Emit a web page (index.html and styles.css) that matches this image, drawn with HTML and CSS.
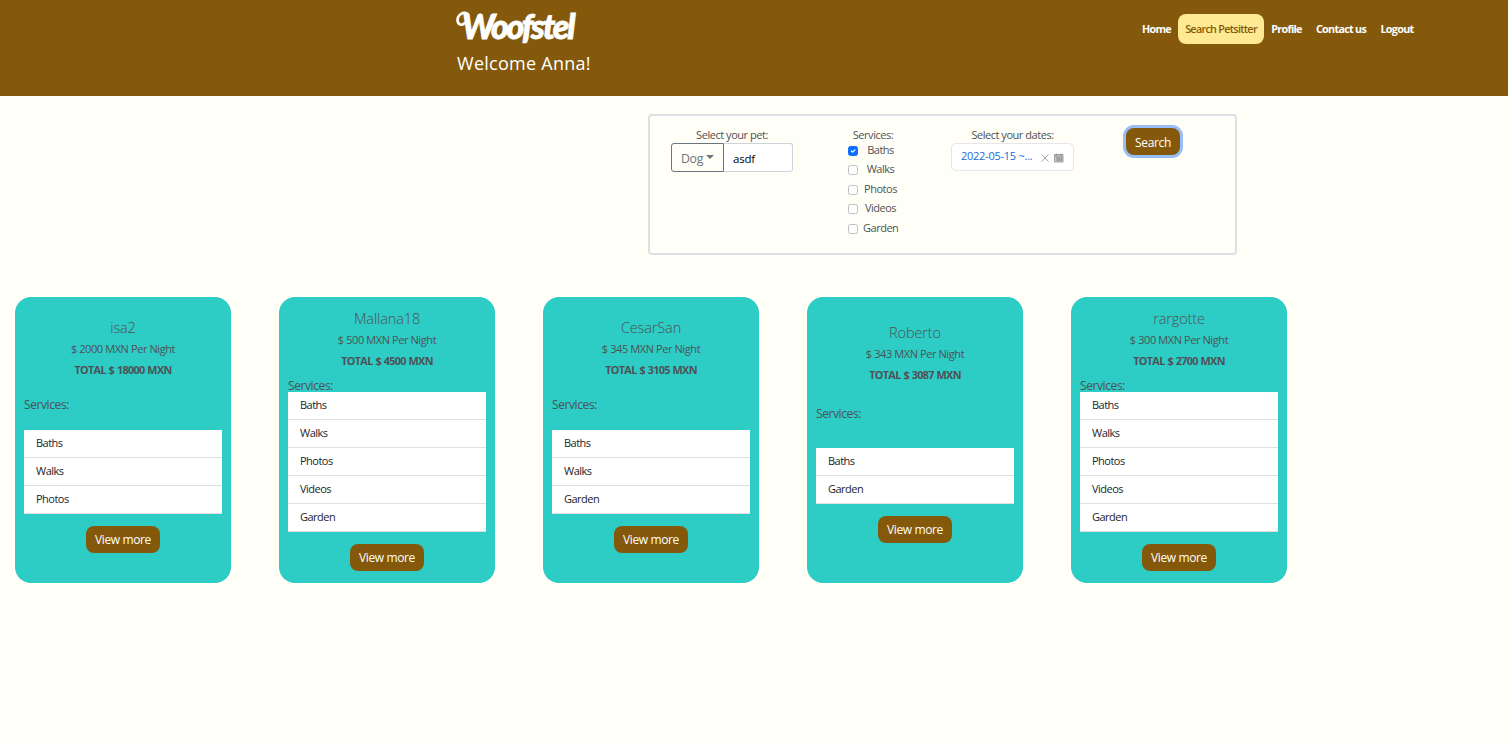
FILE: index.html
```html
<!DOCTYPE html>
<html lang="en">
<head>
<meta charset="utf-8">
<title>Woofstel</title>
<link rel="stylesheet" href="styles.css">
</head>
<body>
<header class="header">
  <div class="brand">
    <h1 class="logo"><svg class="swash" viewBox="0 0 14 22"><path d="M12 3C7 0 1.500 4 1.500 9c0 5 5 6 7 3" fill="none" stroke="#fff" stroke-width="2.600" stroke-linecap="round"/></svg>Woofstel</h1>
    <p class="welcome">Welcome Anna!</p>
  </div>
  <nav class="nav">
    <a class="home">Home</a><a class="active">Search Petsitter</a><a class="profile">Profile</a><a class="contact">Contact us</a><a class="logout">Logout</a>
  </nav>
</header>
<main>
  <section class="filters">
    <div class="field pet">
      <span class="label">Select your pet:</span>
      <div class="group"><button class="drop">Dog<i class="caret"></i></button><div class="name">asdf</div></div>
    </div>
    <div class="field services">
      <span class="label">Services:</span>
      <div class="check"><i class="box checked"><svg viewBox="0 0 20 20"><path d="M6 10l3 3 6-6" fill="none" stroke="#fff" stroke-width="3" stroke-linecap="round" stroke-linejoin="round"/></svg></i><span>Baths</span></div>
      <div class="check"><i class="box"></i><span>Walks</span></div>
      <div class="check"><i class="box"></i><span>Photos</span></div>
      <div class="check"><i class="box"></i><span>Videos</span></div>
      <div class="check"><i class="box"></i><span>Garden</span></div>
    </div>
    <div class="field dates">
      <span class="label">Select your dates:</span>
      <div class="picker"><span class="range">2022-05-15 ~...</span>
        <svg class="clear" viewBox="0 0 8 8"><path d="M.5.5l7 7M7.500.5l-7 7" stroke="#8e8e93" stroke-width=".8"/></svg>
        <svg class="calendar" viewBox="0 0 10 10"><path d="M.5 1.500h8.500v7.500H.5z" fill="#c9c9cc" stroke="#8e8e93" stroke-width=".8"/><path d="M.5 3h8.500M2.500.5V2.500M7 .5V2.500M2 5h6M2 7h6M3.500 4v4M5.500 4v4M7.500 4v4" fill="none" stroke="#8e8e93" stroke-width=".8"/></svg>
      </div>
    </div>
    <button class="button search">Search</button>
  </section>
  <section class="cards">
    <article class="card three">
      <h2>isa2</h2><p class="price">$ 2000 MXN Per Night</p><p class="total">TOTAL $ 18000 MXN</p>
      <p class="heading">Services:</p>
      <ul><li>Baths</li><li>Walks</li><li>Photos</li></ul>
      <button class="button">View more</button>
    </article>
    <article class="card five">
      <h2>Mallana18</h2><p class="price">$ 500 MXN Per Night</p><p class="total">TOTAL $ 4500 MXN</p>
      <p class="heading">Services:</p>
      <ul><li>Baths</li><li>Walks</li><li>Photos</li><li>Videos</li><li>Garden</li></ul>
      <button class="button">View more</button>
    </article>
    <article class="card three">
      <h2>CesarSan</h2><p class="price">$ 345 MXN Per Night</p><p class="total">TOTAL $ 3105 MXN</p>
      <p class="heading">Services:</p>
      <ul><li>Baths</li><li>Walks</li><li>Garden</li></ul>
      <button class="button">View more</button>
    </article>
    <article class="card two">
      <h2>Roberto</h2><p class="price">$ 343 MXN Per Night</p><p class="total">TOTAL $ 3087 MXN</p>
      <p class="heading">Services:</p>
      <ul><li>Baths</li><li>Garden</li></ul>
      <button class="button">View more</button>
    </article>
    <article class="card five">
      <h2>rargotte</h2><p class="price">$ 300 MXN Per Night</p><p class="total">TOTAL $ 2700 MXN</p>
      <p class="heading">Services:</p>
      <ul><li>Baths</li><li>Walks</li><li>Photos</li><li>Videos</li><li>Garden</li></ul>
      <button class="button">View more</button>
    </article>
  </section>
</main>
</body>
</html>
```
FILE: styles.css
```css
* { box-sizing: border-box; }
body {
  margin: 0;
  min-height: 743px;
  background: #fffff8;
  color: #4d5256;
  font-family: "Open Sans", "Noto Sans", sans-serif;
  font-size: 11px;
}
h1, h2, p, ul { margin: 0; padding: 0; font-weight: 400; }
button { font-family: inherit; padding: 0; }
.header {
  display: flex;
  justify-content: space-between;
  height: 96px;
  padding: 0 87px 0 456px;
  background: #84590b;
  color: #fff;
}
.logo {
  position: relative;
  height: 52px;
  padding-left: 6px;
  font: italic 900 34px/51px Lato, sans-serif;
  letter-spacing: -2.2px;
  -webkit-text-stroke: .8px #fff;
}
.swash { position: absolute; left: 0; top: 11px; width: 14px; height: 22px; }
.welcome { font-size: 18px; line-height: 23px; letter-spacing: .27px; padding-left: 1px; white-space: nowrap; }
.nav { display: flex; padding-top: 14px; }
.nav a {
  height: 30px;
  line-height: 30px;
  text-align: center;
  font-size: 10.8px;
  font-weight: 700;
  letter-spacing: -.73px;
  white-space: nowrap;
}
.home { width: 43px; }
.nav .active { width: 86px; border-radius: 8px; background: #ffe992; color: #84590b; font-weight: 600; letter-spacing: -.7px; }
.profile { width: 45px; }
.contact { width: 64px; }
.logout { width: 48px; }
.filters {
  display: flex;
  width: 589px;
  height: 141px;
  margin: 18px 0 0 648px;
  padding: 12px 0 0 21px;
  border: 2px solid #dee0e6;
  border-radius: 4px;
}
.field { display: flex; flex-direction: column; }
.label { height: 15px; line-height: 13px; text-align: center; letter-spacing: -.46px; white-space: nowrap; }
.pet { width: 122px; }
.group { display: flex; height: 29px; }
.drop {
  display: flex;
  align-items: center;
  width: 53px;
  padding: 2px 0 0 9px;
  border: 1px solid #6c757d;
  border-radius: 3px 0 0 3px;
  background: transparent;
  color: #6c757d;
  font-size: 12.3px;
  letter-spacing: -.3px;
}
.caret { margin: -4px 0 0 3px; border: 4px solid transparent; border-top-color: #6c757d; border-bottom: 0; }
.name {
  width: 69px;
  padding-left: 9px;
  border: 1px solid #ced4da;
  border-left: 0;
  border-radius: 0 3px 3px 0;
  background: #fff;
  color: #000;
  font-size: 11.5px;
  letter-spacing: -.2px;
  line-height: 29px;
}
.services { width: 50px; margin-left: 55px; }
.check { display: flex; align-items: center; height: 19.5px; line-height: 14px; letter-spacing: -.48px; }
.services .label { margin-bottom: -3px; }
.check span { flex: 1; margin-left: 5px; text-align: center; white-space: nowrap; }
.box { flex: none; width: 10px; height: 10px; margin-top: 2px; border: 1px solid #bfbfbf; border-radius: 2.5px; background: #fff; }
.box svg { display: block; width: 8px; height: 8px; }
.checked { border-color: #0d6efd; background: #0d6efd; }
.dates { width: 123px; margin-left: 53px; }
.picker {
  display: flex;
  align-items: center;
  height: 28px;
  padding: 0 9px;
  border: 1px solid #e5e5ea;
  border-radius: 5px;
  background: #fff;
  box-shadow: 0 5px 0 -2px #fffff8, 0 6px 0 -3px #edf3fa;
}
.range { width: 80px; color: #2468d8; line-height: 24px; margin-top: -2px; letter-spacing: -.25px; white-space: nowrap; }
.clear { flex: none; width: 8px; height: 8px; margin: 1px 5px 0 1px; }
.calendar { flex: none; width: 10px; height: 10px; margin-top: 1px; }
.button {
  width: 74px;
  height: 27px;
  border: 0;
  border-radius: 8px;
  background: #84590b;
  color: #fff;
  font-size: 12px;
  line-height: 27px;
  letter-spacing: -.37px;
}
.search { width: 54px; margin: 0 0 0 52px; padding-top: 2px; line-height: 25px; box-shadow: 0 0 0 3px #98bdf7; }
.cards { display: flex; gap: 48px; margin: 42px 0 0 15px; }
.card {
  display: flex;
  flex-direction: column;
  align-items: center;
  width: 216px;
  height: 286px;
  padding: 10px 9px 0;
  border-radius: 16px;
  background: #2dccc5;
}
.three { padding-top: 19px; }
.two { padding-top: 24px; }
.card h2 { font-size: 14.5px; line-height: 24px; letter-spacing: -.12px; font-weight: 350; }
.price { line-height: 17px; letter-spacing: -.41px; }
.total { margin-top: 3px; line-height: 20px; padding-bottom: 2px; font-size: 10.8px; font-weight: 700; letter-spacing: -.64px; word-spacing: .6px; }
.heading { align-self: flex-start; margin-top: 4px; font-size: 12px; line-height: 18px; letter-spacing: -.4px; }
.three .heading { margin-top: 14px; }
.two .heading { margin-top: 18px; }
.card ul { position: relative; width: 198px; margin: -3px 0 12px; list-style: none; }
.three ul { margin-top: 16px; }
.two ul { margin-top: 25px; }
.card li {
  height: 28px;
  padding-left: 12px;
  border-bottom: 1px solid #dfdfdf;
  background: #fff;
  color: #212529;
  line-height: 25px;
  letter-spacing: -.52px;
}
```
